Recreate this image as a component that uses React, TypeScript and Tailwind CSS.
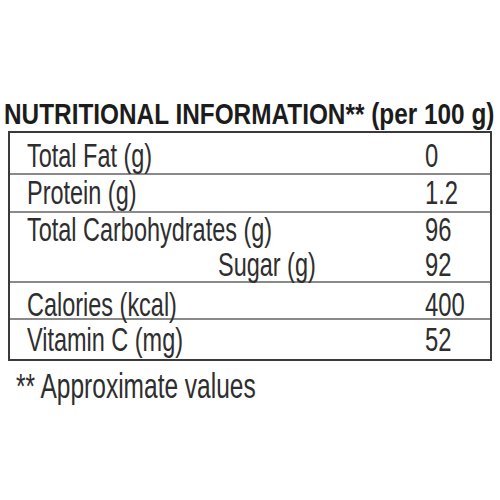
import React from 'react';

type Item = { label: string; value: string; indent?: boolean };
type Row = { box: string; items: Item[] };

// row heights and top padding are tuned to the printed label
const rows: Row[] = [
  { box: 'h-[42px] pt-[7px] border-b-2', items: [{ label: 'Total Fat (g)', value: '0' }] },
  { box: 'h-[38px] pt-[2px] border-b-2', items: [{ label: 'Protein (g)', value: '1.2' }] },
  {
    box: 'h-[70px] pt-[1px] border-b-2 gap-[5px]',
    items: [
      { label: 'Total Carbohydrates (g)', value: '96' },
      { label: 'Sugar (g)', value: '92', indent: true },
    ],
  },
  { box: 'h-[37px] pt-[6px] border-b-2', items: [{ label: 'Calories (kcal)', value: '400' }] },
  { box: 'h-[39px] pt-[4px]', items: [{ label: 'Vitamin C (mg)', value: '52' }] },
];

const Narrow: React.FC<{ children: React.ReactNode; className?: string }> = ({ children, className = '' }) => (
  <span className={`inline-block origin-left whitespace-nowrap ${className}`}>{children}</span>
);

const App: React.FC = () => {
  return (
    <div className="w-[500px] h-[500px] overflow-hidden bg-white text-[#2e2e2e] font-['Liberation_Sans',Arial,sans-serif] pt-[99px]">
      <h1 className="ml-[4px] h-[30px] text-[30px] leading-[30px] font-bold text-[#1c1c1c]">
        <Narrow className="[transform:scaleX(0.812)]">NUTRITIONAL INFORMATION** (per 100 g)</Narrow>
      </h1>
      <div className="ml-[8px] mt-[2px] w-[484px] border-2 border-[#3a3a3a] flex flex-col">
        {rows.map((row, i) => (
          <div key={i} className={`${row.box} border-[#8a8a8a] flex flex-col`}>
            {row.items.map((it) => (
              <div key={it.label} className="flex h-[30px] text-[34px] leading-[30px]">
                <div className={`${it.indent ? 'pl-[208px]' : 'pl-[17px]'} w-[415px] shrink-0`}>
                  <Narrow className="[transform:scaleX(0.69)]">{it.label}</Narrow>
                </div>
                <Narrow className="[transform:scaleX(0.7)]">{it.value}</Narrow>
              </div>
            ))}
          </div>
        ))}
      </div>
      <p className="ml-[16px] mt-[8px] text-[35px] leading-[34px]">
        <Narrow className="[transform:scaleX(0.7)]">** Approximate values</Narrow>
      </p>
    </div>
  );
};

export default App;
